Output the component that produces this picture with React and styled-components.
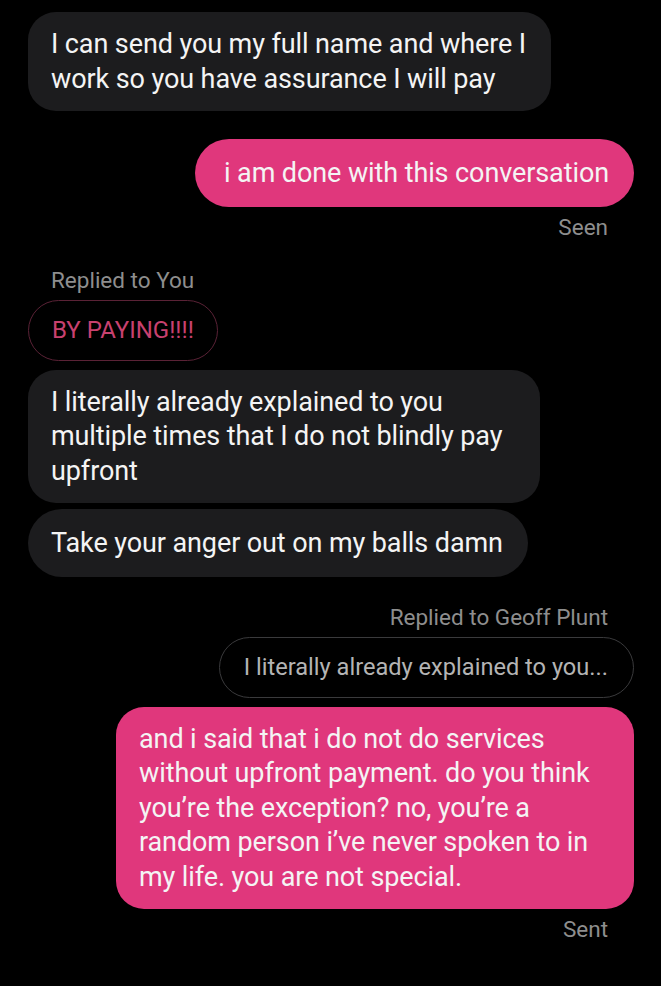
import styled, { createGlobalStyle } from "styled-components";

const GlobalStyle = createGlobalStyle`
  html, body {
    margin: 0;
    padding: 0;
    background: #000;
  }
  body {
    font-family: Roboto, "Liberation Sans", sans-serif;
    -webkit-font-smoothing: antialiased;
  }
`;

const messages = [
  {
    type: "in",
    lines: ["I can send you my full name and where I", "work so you have assurance I will pay"],
  },
  { type: "out", lines: ["i am done with this conversation"], status: "Seen", gap: 28 },
  { type: "replyLabel", side: "in", text: "Replied to You" },
  { type: "quote", side: "in", text: "BY PAYING!!!!" },
  {
    type: "in",
    lines: [
      "I literally already explained to you",
      "multiple times that I do not blindly pay",
      "upfront",
    ],
    gap: 9,
  },
  { type: "in", lines: ["Take your anger out on my balls damn"], gap: 6 },
  { type: "replyLabel", side: "out", text: "Replied to Geoff Plunt", gap: 28 },
  { type: "quote", side: "out", text: "I literally already explained to you..." },
  {
    type: "out",
    lines: [
      "and i said that i do not do services",
      "without upfront payment. do you think",
      "you’re the exception? no, you’re a",
      "random person i’ve never spoken to in",
      "my life. you are not special.",
    ],
    status: "Sent",
    gap: 9,
    wide: true,
  },
];

const App = () => {
  return (
    <>
      <GlobalStyle />
      <Thread>
        {messages.map((m, i) => {
          if (m.type === "replyLabel") {
            return (
              <ReplyLabel key={i} $side={m.side} $gap={m.gap}>
                {m.text}
              </ReplyLabel>
            );
          }
          if (m.type === "quote") {
            return (
              <Quote key={i} $side={m.side}>
                {m.text}
              </Quote>
            );
          }
          return (
            <Group key={i} $side={m.type} $gap={m.gap}>
              <Bubble $side={m.type} $single={m.lines.length === 1} $wide={m.wide}>
                {m.lines.map((l, j) => (
                  <Line key={j}>{l}</Line>
                ))}
              </Bubble>
              {m.status && <Status>{m.status}</Status>}
            </Group>
          );
        })}
      </Thread>
    </>
  );
};

const Thread = styled.div`
  width: 661px;
  min-height: 986px;
  box-sizing: border-box;
  padding: 12px 27px 0 28px;
  display: flex;
  flex-direction: column;
  background: #000;
`;

const Group = styled.div`
  display: flex;
  flex-direction: column;
  align-items: ${(p) => (p.$side === "out" ? "flex-end" : "flex-start")};
  margin-top: ${(p) => (p.$gap !== undefined ? p.$gap : 29)}px;

  &:first-child {
    margin-top: 0;
  }
`;

const Bubble = styled.div`
  box-sizing: border-box;
  padding: ${(p) => (p.$single ? "16.5px" : "15px")} 25px;
  padding-left: ${(p) => (p.$side === "out" && p.$single ? "29px" : "23px")};
  border-radius: ${(p) => (p.$single ? "34px" : "28px")};
  background: ${(p) => (p.$side === "out" ? "#e0377c" : "#1c1c1e")};
  color: #f4f4f4;
  font-size: 27px;
  line-height: 34.5px;
  letter-spacing: -0.1px;
  width: ${(p) => (p.$wide ? "518px" : "auto")};
  ${(p) => (p.$side === "in" && !p.$single ? "min-width: 512px;" : "")}
`;

const Line = styled.div`
  white-space: nowrap;
`;

const Status = styled.div`
  margin-top: 8px;
  margin-right: 26px;
  color: #8e8e8e;
  font-size: 22.5px;
  line-height: 24px;
`;

const ReplyLabel = styled.div`
  align-self: ${(p) => (p.$side === "out" ? "flex-end" : "flex-start")};
  margin-top: ${(p) => (p.$gap !== undefined ? p.$gap : 29)}px;
  ${(p) => (p.$side === "out" ? "margin-right: 26px;" : "margin-left: 23px;")}
  color: #8e8e8e;
  font-size: 22.5px;
  line-height: 24px;
`;

const Quote = styled.div`
  align-self: ${(p) => (p.$side === "out" ? "flex-end" : "flex-start")};
  margin-top: 8px;
  box-sizing: border-box;
  height: 61px;
  display: flex;
  align-items: center;
  padding: 0 25px 0 23px;
  border-radius: 31px;
  border: 1.5px solid ${(p) => (p.$side === "out" ? "#3a3a3c" : "#5a2236")};
  color: ${(p) => (p.$side === "out" ? "#b4b4b4" : "#c8416f")};
  font-size: ${(p) => (p.$side === "out" ? "23.6px" : "24px")};
  white-space: nowrap;
  width: ${(p) => (p.$side === "out" ? "415px" : "190px")};
  justify-content: ${(p) => (p.$side === "out" ? "flex-end" : "flex-start")};
`;

export default App;
